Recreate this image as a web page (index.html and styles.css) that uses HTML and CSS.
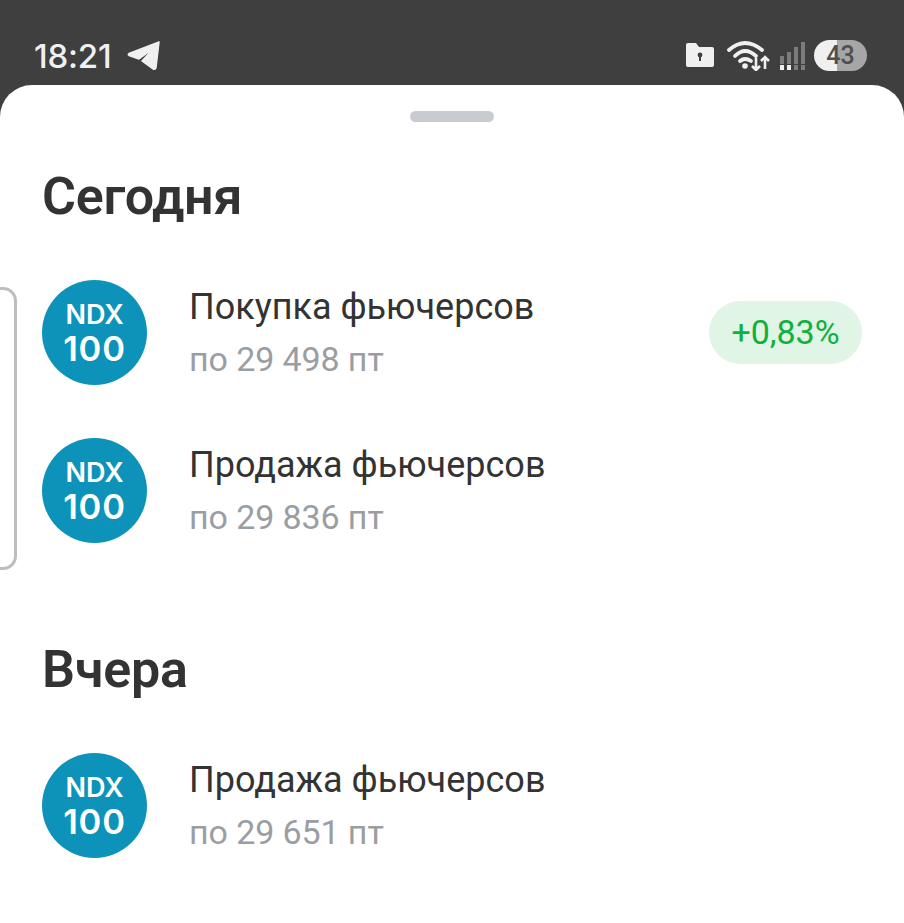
FILE: index.html
```html
<!doctype html>
<html lang="ru">
<head>
    <meta charset="UTF-8">
    <meta name="viewport" content="width=device-width, initial-scale=1.0">
    <title>Сделки</title>
    <link rel="stylesheet" href="styles.css">
</head>
<body>
<div class="status">
    <div class="status-left">
        <span class="time">18:21</span>
        <svg class="tg" width="34" height="30" viewBox="0 0 34 30">
            <path d="M32 1 L2 12.5 Q0.5 13.5 2 14.5 L12 18 L27 7 L15 20 L26 28 Q28.5 29 29 26.5 Z" fill="#f0f0f0" stroke="#f0f0f0" stroke-width="1.5" stroke-linejoin="round"/>
        </svg>
    </div>
    <div class="status-right">
        <svg class="folder" width="28" height="24" viewBox="0 0 28 24">
            <path d="M2 0 H10 L13 4 H26 Q28 4 28 6 V22 Q28 24 26 24 H2 Q0 24 0 22 V2 Q0 0 2 0 Z" fill="#f0f0f0"/>
            <circle cx="14" cy="12" r="2.4" fill="#3f3f3f"/>
            <rect x="13" y="12" width="2" height="6" fill="#3f3f3f"/>
        </svg>
        <svg class="wifi" width="43" height="32" viewBox="0 0 43 32">
            <g fill="none" stroke="#f0f0f0" stroke-width="3.8" stroke-linecap="round">
                <path d="M2 11 Q18 -3 35 11"/>
                <path d="M8 17 Q18 7 29 17"/>
                <path d="M13 22 Q18 18 24 22"/>
            </g>
            <circle cx="18" cy="27" r="2.8" fill="#f0f0f0"/>
            <g fill="none" stroke="#f0f0f0" stroke-width="2.6">
                <path d="M29 19 V31 M25 27 L29 31 L33 27"/>
                <path d="M38 30 V18 M34 22 L38 18 L42 22"/>
            </g>
        </svg>
        <svg class="signal" width="26" height="28" viewBox="0 0 26 28">
            <g fill="#7c7c7c">
                <rect x="0" y="14" width="4" height="8"/>
                <rect x="7" y="10" width="4" height="12"/>
                <rect x="14" y="5" width="4" height="17"/>
                <rect x="21" y="0" width="4" height="22"/>
                <rect x="14" y="23" width="4" height="5"/>
                <rect x="21" y="23" width="4" height="5"/>
            </g>
            <g fill="#f0f0f0">
                <rect x="0" y="23" width="4" height="5"/>
                <rect x="7" y="23" width="4" height="5"/>
            </g>
        </svg>
        <div class="battery">43</div>
    </div>
</div>

<div class="sheet">
    <div class="handle"></div>
    <div class="side-edge"></div>

    <h2 class="day-title">Сегодня</h2>
    <div class="deal">
        <div class="ndx"><span class="ndx-top">NDX</span><span class="ndx-num">100</span></div>
        <div class="deal-text">
            <div class="deal-name">Покупка фьючерсов</div>
            <div class="deal-price">по 29 498 пт</div>
        </div>
        <div class="badge">+0,83%</div>
    </div>
    <div class="deal">
        <div class="ndx"><span class="ndx-top">NDX</span><span class="ndx-num">100</span></div>
        <div class="deal-text">
            <div class="deal-name">Продажа фьючерсов</div>
            <div class="deal-price">по 29 836 пт</div>
        </div>
    </div>

    <h2 class="day-title day-second">Вчера</h2>
    <div class="deal">
        <div class="ndx"><span class="ndx-top">NDX</span><span class="ndx-num">100</span></div>
        <div class="deal-text">
            <div class="deal-name">Продажа фьючерсов</div>
            <div class="deal-price">по 29 651 пт</div>
        </div>
    </div>
</div>
</body>
</html>
```
FILE: styles.css
```css
* {
    margin: 0;
    padding: 0;
    box-sizing: border-box;
}

html, body {
    height: 923px;
    overflow: hidden;
}

body {
    background-color: #3f3f3f;
    font-family: Roboto, "Noto Sans", sans-serif;
}

.status {
    height: 85px;
    padding: 34px 37px 0 34px;
    display: flex;
    justify-content: space-between;
    align-items: flex-start;
}

.status-left {
    display: flex;
    align-items: center;
    gap: 15px;
}

.time {
    font-family: Inter, Roboto, sans-serif;
    font-size: 33px;
    line-height: 44px;
    font-weight: 500;
    letter-spacing: -0.2px;
    color: #f0f0f0;
}

.status-right {
    display: flex;
    align-items: center;
    height: 42px;
}

.folder {
    margin-right: 13px;
}

.wifi {
    margin-right: 10px;
}

.signal {
    margin-top: 2px;
    margin-right: 8px;
}

.battery {
    width: 53px;
    height: 31px;
    margin-top: 1px;
    border-radius: 16px;
    background: linear-gradient(to right, #f0f0f0 43%, #a6a6a6 43%);
    color: #4f4f4f;
    font-size: 25px;
    line-height: 31px;
    font-weight: 500;
    text-align: center;
}

.sheet {
    height: 838px;
    position: relative;
    background-color: #fff;
    border-radius: 32px 32px 0 0;
    padding: 26px 42px 0;
}

.handle {
    width: 84px;
    height: 11px;
    margin: 0 auto;
    border-radius: 6px;
    background-color: #c8ccd0;
}

.side-edge {
    position: absolute;
    left: -4px;
    top: 202px;
    width: 21px;
    height: 283px;
    border: 3px solid #bdbdbd;
    border-radius: 0 14px 14px 0;
}

.day-title {
    margin-top: 45px;
    margin-bottom: 53px;
    font-size: 52px;
    line-height: 60px;
    font-weight: 600;
    letter-spacing: -0.2px;
    color: #333;
}

.day-second {
    margin-top: 97px;
}

.deal {
    height: 105px;
    margin-bottom: 53px;
    display: flex;
    align-items: center;
    gap: 42px;
}

.ndx {
    width: 105px;
    height: 105px;
    flex-shrink: 0;
    border-radius: 50%;
    background-color: #0d93b9;
    color: #fff;
    display: flex;
    flex-direction: column;
    align-items: center;
    justify-content: center;
    font-family: Inter, sans-serif;
    font-weight: 600;
}

.ndx-top {
    margin-top: 1px;
    font-size: 27px;
    line-height: 31px;
}

.ndx-num {
    font-size: 34.5px;
    line-height: 38px;
    letter-spacing: 0.8px;
}

.deal-text {
    flex: 1;
}

.deal-name {
    font-size: 36px;
    line-height: 50px;
    font-weight: 450;
    color: #333;
}

.deal-price {
    margin-top: 2px;
    font-size: 34px;
    line-height: 50px;
    letter-spacing: -0.1px;
    color: #9a9ea3;
}

.badge {
    width: 153px;
    height: 63px;
    border-radius: 32px;
    background-color: #e0f5e5;
    color: #10b03c;
    font-size: 34px;
    line-height: 63px;
    font-weight: 450;
    text-align: center;
}
```
